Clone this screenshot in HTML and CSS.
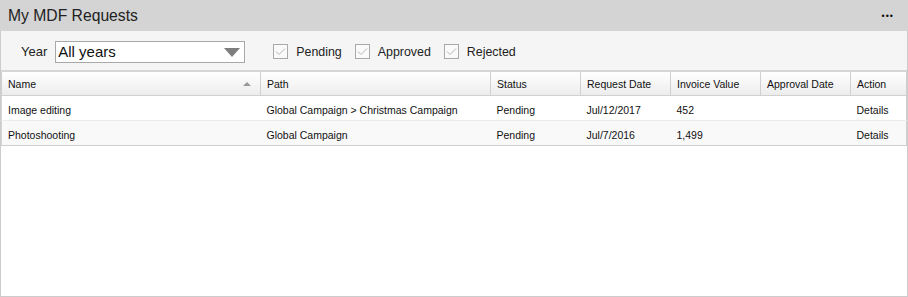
FILE: index.html
```html
<!DOCTYPE html>
<html lang="en">
<head>
    <meta charset="UTF-8">
    <title>My MDF Requests</title>
    <link rel="stylesheet" href="styles.css">
</head>
<body>

<div class="widget">
    <div class="widget-header">
        <span class="widget-title">My MDF Requests</span>
        <span class="widget-menu">&bull;&bull;&bull;</span>
    </div>

    <div class="widget-body">
        <!-- Filters -->
        <div class="toolbar">
            <label class="year-label">Year</label>
            <div class="select">
                <span>All years</span>
                <svg width="16" height="9" viewBox="0 0 16 9"><polygon points="0,0 16,0 8,9" fill="#7d7d7d"/></svg>
            </div>
            <div class="filters">
                <label class="check"><span class="box"><svg width="11" height="9" viewBox="0 0 11 9"><polyline points="1,4.5 4,7.5 10,1.5" fill="none" stroke="#b5b5b5" stroke-width="1"/></svg></span>Pending</label>
                <label class="check"><span class="box"><svg width="11" height="9" viewBox="0 0 11 9"><polyline points="1,4.5 4,7.5 10,1.5" fill="none" stroke="#b5b5b5" stroke-width="1"/></svg></span>Approved</label>
                <label class="check"><span class="box"><svg width="11" height="9" viewBox="0 0 11 9"><polyline points="1,4.5 4,7.5 10,1.5" fill="none" stroke="#b5b5b5" stroke-width="1"/></svg></span>Rejected</label>
            </div>
        </div>

        <!-- Requests grid -->
        <table class="grid">
            <colgroup>
                <col style="width:259px">
                <col style="width:230px">
                <col style="width:90px">
                <col style="width:90px">
                <col style="width:90px">
                <col style="width:90px">
                <col>
            </colgroup>
            <thead>
                <tr>
                    <th class="sorted">Name<span class="sort-arrow"></span></th>
                    <th>Path</th>
                    <th>Status</th>
                    <th>Request Date</th>
                    <th>Invoice Value</th>
                    <th>Approval Date</th>
                    <th>Action</th>
                </tr>
            </thead>
            <tbody>
                <tr>
                    <td>Image editing</td>
                    <td>Global Campaign &gt; Christmas Campaign</td>
                    <td>Pending</td>
                    <td>Jul/12/2017</td>
                    <td>452</td>
                    <td></td>
                    <td>Details</td>
                </tr>
                <tr class="alt">
                    <td>Photoshooting</td>
                    <td>Global Campaign</td>
                    <td>Pending</td>
                    <td>Jul/7/2016</td>
                    <td>1,499</td>
                    <td></td>
                    <td>Details</td>
                </tr>
            </tbody>
        </table>
    </div>
</div>

</body>
</html>
```

FILE: styles.css
```css
body { margin: 0; font-family: "Liberation Sans", Arial, sans-serif; color: #1a1a1a; background: #fff; }
.widget { width: 908px; height: 297px; box-sizing: border-box; display: flex; flex-direction: column; }
.widget-header { height: 31px; background: #d4d4d4; display: flex; align-items: center; justify-content: space-between; padding: 0 14px 0 8px; flex-shrink: 0; }
.widget-title { font-size: 15.7px; color: #222; }
.widget-menu { font-size: 9px; letter-spacing: 1px; color: #111; margin-top: 0; }
.widget-body { flex: 1; border: 1px solid #cccccc; border-top: none; background: #fff; }
.toolbar { height: 39px; background: #f5f5f5; display: flex; align-items: center; padding-left: 20px; box-sizing: border-box; }
.year-label { font-size: 13px; color: #222; margin-right: 8px; margin-top: 2px; }
.select { width: 190px; height: 22px; box-sizing: border-box; border: 1px solid #a9a9a9; background: #fff; display: flex; align-items: center; justify-content: space-between; padding: 0 4px 0 2px; font-size: 15px; color: #111; margin-top: 2px; }
.select svg { margin-top: 1px; }
.filters { display: flex; margin-left: 28px; margin-top: 2px; }
.check { display: flex; align-items: center; font-size: 12.4px; color: #222; margin-right: 13px; }
.box { width: 15px; height: 15px; box-sizing: border-box; border: 1px solid #a9a9a9; background: #fafafa; display: flex; align-items: center; justify-content: center; margin-right: 8px; }
.grid { width: 906px; border-collapse: collapse; table-layout: fixed; font-size: 10.5px; border: 1px solid #cfcfcf; border-left: 1px solid #d4d4d4; margin-top: 0; }
.grid th { height: 23px; text-align: left; font-weight: normal; padding: 0 6px; background: linear-gradient(#ffffff, #ececec); border: 1px solid #d0d0d0; border-top: 2px solid #d6d6d6; color: #111; position: relative; }
.grid th.sorted .sort-arrow { position: absolute; right: 9px; top: 10px; border-left: 4px solid transparent; border-right: 4px solid transparent; border-bottom: 4px solid #999; }
.grid td { height: 25px; padding: 3px 6px 0; box-sizing: border-box; border-bottom: 1px solid #ececec; color: #111; white-space: nowrap; }
.grid tr.alt td { background: #f9f9f9; border-bottom: 1px solid #cfcfcf; }
```
